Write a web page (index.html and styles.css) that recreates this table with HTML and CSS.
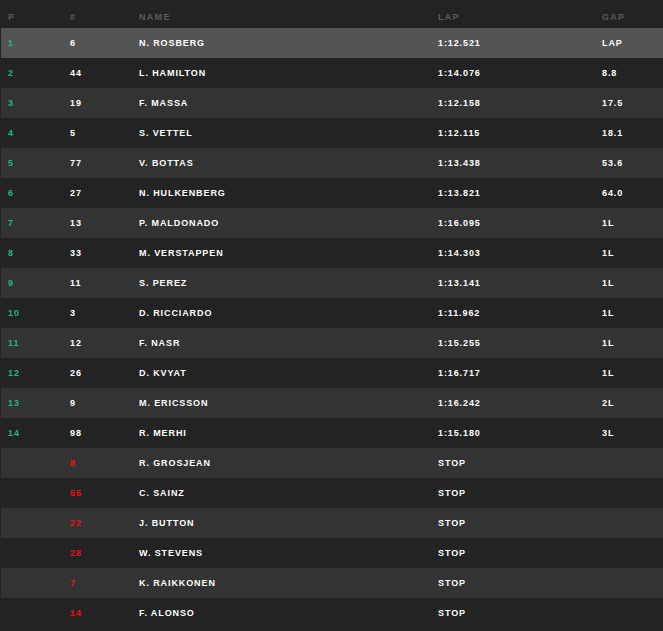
FILE: index.html
```html
<!DOCTYPE html>
<html>
<head>
<meta charset="utf-8">
<link rel="stylesheet" href="styles.css">
</head>
<body>
<div class="board">
  <div class="row head"><span>P</span><span>#</span><span>NAME</span><span>LAP</span><span>GAP</span></div>
  <div class="row lead"><span class="pos">1</span><span>6</span><span>N. ROSBERG</span><span>1:12.521</span><span>LAP</span></div>
  <div class="row"><span class="pos">2</span><span>44</span><span>L. HAMILTON</span><span>1:14.076</span><span>8.8</span></div>
  <div class="row alt"><span class="pos">3</span><span>19</span><span>F. MASSA</span><span>1:12.158</span><span>17.5</span></div>
  <div class="row"><span class="pos">4</span><span>5</span><span>S. VETTEL</span><span>1:12.115</span><span>18.1</span></div>
  <div class="row alt"><span class="pos">5</span><span>77</span><span>V. BOTTAS</span><span>1:13.438</span><span>53.6</span></div>
  <div class="row"><span class="pos">6</span><span>27</span><span>N. HULKENBERG</span><span>1:13.821</span><span>64.0</span></div>
  <div class="row alt"><span class="pos">7</span><span>13</span><span>P. MALDONADO</span><span>1:16.095</span><span>1L</span></div>
  <div class="row"><span class="pos">8</span><span>33</span><span>M. VERSTAPPEN</span><span>1:14.303</span><span>1L</span></div>
  <div class="row alt"><span class="pos">9</span><span>11</span><span>S. PEREZ</span><span>1:13.141</span><span>1L</span></div>
  <div class="row"><span class="pos">10</span><span>3</span><span>D. RICCIARDO</span><span>1:11.962</span><span>1L</span></div>
  <div class="row alt"><span class="pos">11</span><span>12</span><span>F. NASR</span><span>1:15.255</span><span>1L</span></div>
  <div class="row"><span class="pos">12</span><span>26</span><span>D. KVYAT</span><span>1:16.717</span><span>1L</span></div>
  <div class="row alt"><span class="pos">13</span><span>9</span><span>M. ERICSSON</span><span>1:16.242</span><span>2L</span></div>
  <div class="row"><span class="pos">14</span><span>98</span><span>R. MERHI</span><span>1:15.180</span><span>3L</span></div>
  <div class="row alt"><span class="pos"></span><span class="out">8</span><span>R. GROSJEAN</span><span>STOP</span><span></span></div>
  <div class="row"><span class="pos"></span><span class="out">55</span><span>C. SAINZ</span><span>STOP</span><span></span></div>
  <div class="row alt"><span class="pos"></span><span class="out">22</span><span>J. BUTTON</span><span>STOP</span><span></span></div>
  <div class="row"><span class="pos"></span><span class="out">28</span><span>W. STEVENS</span><span>STOP</span><span></span></div>
  <div class="row alt"><span class="pos"></span><span class="out">7</span><span>K. RAIKKONEN</span><span>STOP</span><span></span></div>
  <div class="row"><span class="pos"></span><span class="out">14</span><span>F. ALONSO</span><span>STOP</span><span></span></div>
</div>
</body>
</html>
```
FILE: styles.css
```css
html, body {
  margin: 0;
  padding: 0;
  background: #232323;
}
body {
  font-family: "Liberation Sans", Arial, sans-serif;
  font-weight: bold;
  font-size: 9px;
  letter-spacing: 0.9px;
  color: #ffffff;
}
.board {
  padding-left: 1px;
}
.row {
  display: grid;
  grid-template-columns: 62px 69px 299px 164px 1fr;
  height: 30px;
  line-height: 30px;
  padding-left: 7px;
  white-space: nowrap;
}
.row.head {
  height: 28px;
  line-height: 22px;
  padding-top: 6px;
  box-sizing: border-box;
  color: #5c5c5c;
  letter-spacing: 1.3px;
}
.row.alt {
  background: #333333;
}
.row.lead {
  background: #545454;
}
.pos {
  color: #1db584;
}
.out {
  color: #ee1111;
}
```
